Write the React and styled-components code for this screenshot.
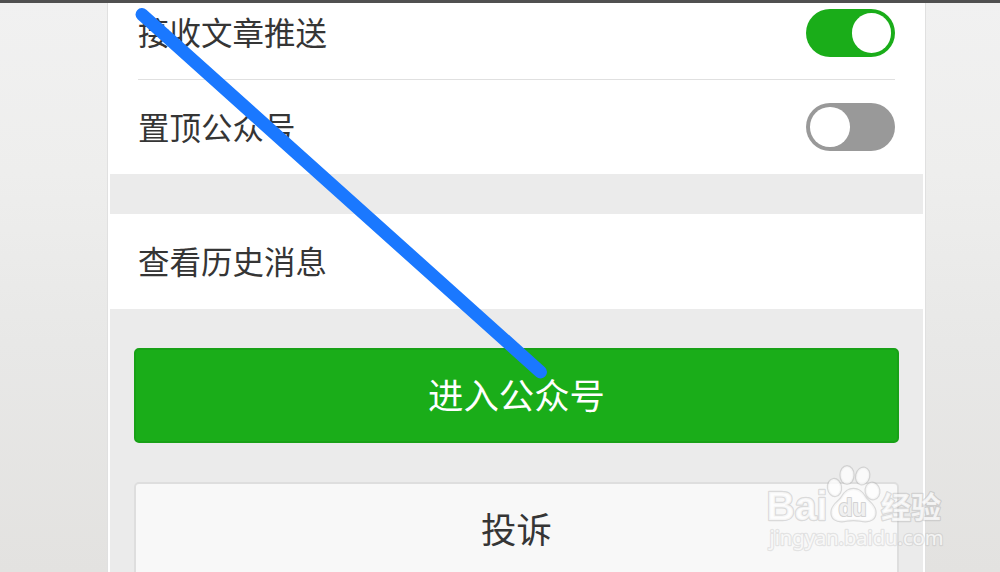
import React, { useState } from "react";
import styled, { createGlobalStyle } from "styled-components";

function App() {
  const [receive, setReceive] = useState(true);
  const [sticky, setSticky] = useState(false);

  return (
    <Page>
      <GlobalStyle />
      <TopBar />
      <Panel>
        <Group>
          <Row $height={76} $divider>
            <Label $lift={20}>接收文章推送</Label>
            <Switch
              $on={receive}
              $top={6}
              aria-label="接收文章推送"
              onClick={() => setReceive(!receive)}
            />
          </Row>
          <Row $height={95}>
            <Label $lift={2}>置顶公众号</Label>
            <Switch
              $on={sticky}
              $top={24}
              aria-label="置顶公众号"
              onClick={() => setSticky(!sticky)}
            />
          </Row>
        </Group>
        <Gap />
        <Group>
          <Row $height={95}>
            <Label $lift={4}>查看历史消息</Label>
          </Row>
        </Group>
        <Actions>
          <Button $primary>进入公众号</Button>
          <Button>投诉</Button>
        </Actions>
      </Panel>
      <Stroke viewBox="0 0 1000 572">
        <line x1="142" y1="14.5" x2="540.5" y2="372" />
      </Stroke>
      <Watermark />
    </Page>
  );
}

function Watermark() {
  return (
    <Mark viewBox="0 0 190 96">
      <text className="latin" x="4.5" y="60" textLength="61" lengthAdjust="spacingAndGlyphs">
        Bai
      </text>
      <ellipse cx="72.5" cy="27.5" rx="6.5" ry="8.5" transform="rotate(-8 72.5 27.5)" />
      <ellipse cx="85" cy="15" rx="6.5" ry="8.8" />
      <ellipse cx="100.7" cy="16" rx="6.5" ry="8.4" transform="rotate(14 100.7 16)" />
      <ellipse cx="110.5" cy="31" rx="6.8" ry="8.3" transform="rotate(-10 110.5 31)" />
      <path d="M91.5 29c6 0 9 3.500 12 8.500 3 4.500 10 7.500 10 15 0 6.500-5 9-10.500 8.700-4-.2-7-1.200-11.500-1.200s-7.500 1-11.500 1.200c-5.500 .3-10.500-2.200-10.500-8.700 0-7.500 7-10.500 10-15 3-5 6-8.500 12-8.500z" />
      <text className="du" x="76.5" y="56" textLength="28" lengthAdjust="spacingAndGlyphs">
        du
      </text>
      <text className="cjk" x="119" y="57.5" textLength="60">
        经验
      </text>
      <text className="site" x="7.5" y="84.5" textLength="174" lengthAdjust="spacingAndGlyphs">
        jingyan.baidu.com
      </text>
    </Mark>
  );
}

const GlobalStyle = createGlobalStyle`
  * {
    box-sizing: border-box;
  }
  body {
    margin: 0;
    overflow: hidden;
    font-family: "Noto Sans CJK SC", sans-serif;
  }
`;

const Page = styled.div`
  position: relative;
  display: flex;
  flex-direction: column;
  align-items: center;
  width: 1000px;
  height: 572px;
  overflow: hidden;
  background: linear-gradient(#f1f1f1 0%, #eeeeed 30%, #e8e8e7 60%, #e3e2e0 100%);
`;

const TopBar = styled.div`
  flex: none;
  width: 100%;
  height: 3px;
  background: #505050;
`;

const Panel = styled.main`
  flex: 1;
  display: flex;
  flex-direction: column;
  width: 819px;
  margin-left: 33px;
  padding: 0 2px;
  border: solid #e0e0e0;
  border-width: 0 1px;
  background: #fff;
`;

const Group = styled.section`
  padding: 0 28px;
  background: #fff;
`;

const Row = styled.div`
  display: flex;
  align-items: flex-start;
  justify-content: space-between;
  height: ${({ $height }) => $height}px;
  ${({ $divider }) => $divider && "box-shadow: 0 1px #e0e0e0;"}
`;

const Label = styled.span`
  align-self: center;
  padding-bottom: ${({ $lift }) => $lift}px;
  color: #353535;
  font-size: 31.5px;
  line-height: 46px;
`;

const Switch = styled.button`
  display: flex;
  align-items: flex-start;
  justify-content: ${({ $on }) => ($on ? "flex-end" : "flex-start")};
  width: 89px;
  height: 48px;
  margin: ${({ $top }) => $top}px 0 0;
  padding: 4px;
  border: 0;
  border-radius: 24px;
  background: ${({ $on }) => ($on ? "#1aad19" : "#999")};
  cursor: pointer;
  &::before {
    content: "";
    width: 39.5px;
    height: 39.5px;
    border-radius: 50%;
    background: #fff;
  }
`;

const Gap = styled.div`
  height: 40px;
  background: #ebebeb;
`;

const Actions = styled.div`
  flex: 1;
  display: flex;
  flex-direction: column;
  gap: 39px;
  padding: 39px 24px 0;
  background: #ebebeb;
`;

const Button = styled.button`
  flex: none;
  height: 95px;
  padding: 0 0 4px;
  border: 2px solid ${({ $primary }) => ($primary ? "#18a117" : "#dedede")};
  border-radius: 5px;
  background: ${({ $primary }) => ($primary ? "#1aad19" : "#f8f8f8")};
  color: ${({ $primary }) => ($primary ? "#fff" : "#353535")};
  font-family: inherit;
  font-size: 35.4px;
  line-height: 50px;
  cursor: pointer;
`;

const Stroke = styled.svg`
  position: absolute;
  inset: 0;
  width: 1000px;
  height: 572px;
  pointer-events: none;
  line {
    stroke: #1a78ff;
    stroke-width: 13px;
    stroke-linecap: round;
  }
`;

const Mark = styled.svg`
  position: absolute;
  left: 762px;
  top: 460px;
  width: 190px;
  height: 96px;
  fill: rgba(255, 255, 255, 0.75);
  stroke: rgba(170, 170, 170, 0.4);
  stroke-width: 2.4px;
  stroke-linejoin: round;
  paint-order: stroke;
  pointer-events: none;
  .latin {
    font: 700 41px "Liberation Sans", sans-serif;
  }
  .du {
    font: 700 24px "Liberation Sans", sans-serif;
    fill: #f0f0f0;
    stroke: #d2d2d2;
    stroke-width: 2px;
  }
  .cjk {
    font: 700 30px "Noto Sans CJK SC", sans-serif;
  }
  .site {
    font: 400 20.5px "Noto Sans", sans-serif;
    stroke: rgba(175, 175, 175, 0.3);
  }
`;

export default App;
